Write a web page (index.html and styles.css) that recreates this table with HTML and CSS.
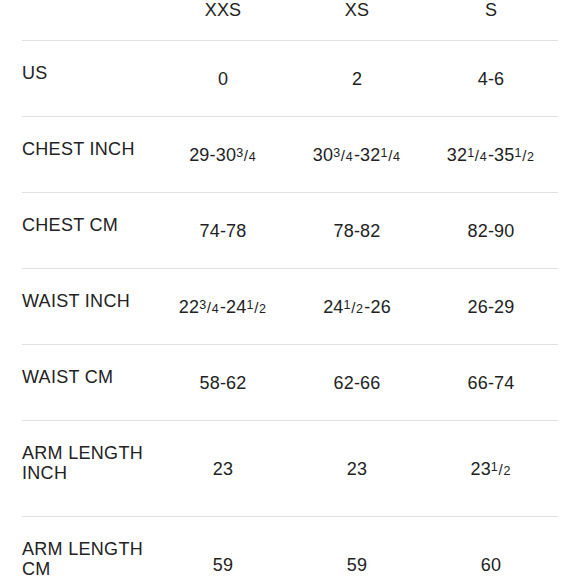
FILE: index.html
```html
<!DOCTYPE html>
<html>
<head>
<meta charset="utf-8">
<link rel="stylesheet" href="styles.css">
</head>
<body>
<div class="chart">
  <div class="row head">
    <div class="label"></div>
    <div class="val">XXS</div>
    <div class="val">XS</div>
    <div class="val">S</div>
  </div>
  <div class="row">
    <div class="label">US</div>
    <div class="val">0</div>
    <div class="val">2</div>
    <div class="val">4-6</div>
  </div>
  <div class="row">
    <div class="label">CHEST INCH</div>
    <div class="val">29-30<span class="frac"><span class="up">3</span><span class="sl">/</span><span class="dn">4</span></span></div>
    <div class="val">30<span class="frac"><span class="up">3</span><span class="sl">/</span><span class="dn">4</span></span>-32<span class="frac"><span class="up">1</span><span class="sl">/</span><span class="dn">4</span></span></div>
    <div class="val">32<span class="frac"><span class="up">1</span><span class="sl">/</span><span class="dn">4</span></span>-35<span class="frac"><span class="up">1</span><span class="sl">/</span><span class="dn">2</span></span></div>
  </div>
  <div class="row">
    <div class="label">CHEST CM</div>
    <div class="val">74-78</div>
    <div class="val">78-82</div>
    <div class="val">82-90</div>
  </div>
  <div class="row">
    <div class="label">WAIST INCH</div>
    <div class="val">22<span class="frac"><span class="up">3</span><span class="sl">/</span><span class="dn">4</span></span>-24<span class="frac"><span class="up">1</span><span class="sl">/</span><span class="dn">2</span></span></div>
    <div class="val">24<span class="frac"><span class="up">1</span><span class="sl">/</span><span class="dn">2</span></span>-26</div>
    <div class="val">26-29</div>
  </div>
  <div class="row">
    <div class="label">WAIST CM</div>
    <div class="val">58-62</div>
    <div class="val">62-66</div>
    <div class="val">66-74</div>
  </div>
  <div class="row">
    <div class="label">ARM LENGTH<br>INCH</div>
    <div class="val">23</div>
    <div class="val">23</div>
    <div class="val">23<span class="frac"><span class="up">1</span><span class="sl">/</span><span class="dn">2</span></span></div>
  </div>
  <div class="row">
    <div class="label">ARM LENGTH<br>CM</div>
    <div class="val">59</div>
    <div class="val">59</div>
    <div class="val">60</div>
  </div>
</div>
</body>
</html>
```
FILE: styles.css
```css
html, body {
  margin: 0;
  padding: 0;
  background: #ffffff;
}
body {
  font-family: "Liberation Sans", Arial, sans-serif;
  font-size: 18px;
  line-height: 20px;
  color: #222222;
}
.chart {
  margin-left: 22px;
  width: 536px;
}
.row {
  display: grid;
  grid-template-columns: repeat(4, 1fr);
  border-bottom: 1px solid #e1e1e1;
}
.label {
  padding: 22px 0 33px;
  text-align: left;
  letter-spacing: 0.3px;
}
.val {
  align-self: center;
  text-align: center;
  white-space: nowrap;
  letter-spacing: 0.2px;
}
.head .label {
  min-height: 20px;
  padding: 0 0 20px;
}
.head .val {
  align-self: start;
}
.frac {
  display: inline-block;
  margin: 0 1px 0 0;
}
.up {
  font-size: 12.5px;
  vertical-align: 4px;
}
.sl {
  font-size: 15px;
  margin: 0 0.5px;
}
.dn {
  font-size: 12.5px;
}
```
